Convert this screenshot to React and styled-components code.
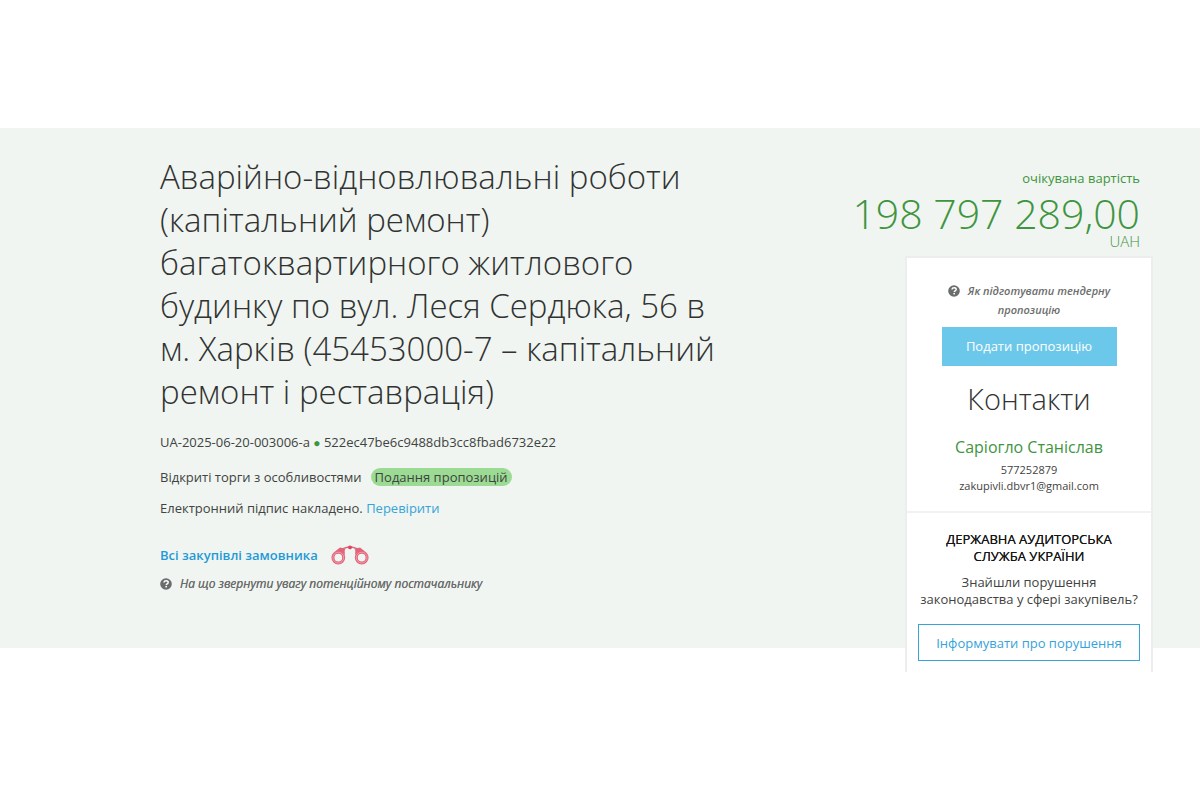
import React from 'react'
import styled, { createGlobalStyle } from 'styled-components'

function HelpIcon() {
    return (
        <HelpSvg viewBox="0 0 12 12" aria-hidden="true">
            <circle cx="6" cy="6" r="5.8" fill="#6b6d6c" />
            <path d="M3.9 4.5c.2-1.2 1-1.8 2.2-1.8 1.2 0 2.1.7 2.1 1.7 0 1.5-1.9 1.5-1.9 2.7" fill="none" stroke="currentColor" strokeWidth="1.5" />
            <rect x="5.4" y="7.9" width="1.6" height="1.5" fill="currentColor" />
        </HelpSvg>
    )
}

function Binoculars() {
    return (
        <BinocularsSvg viewBox="0 0 38 20" aria-hidden="true">
            <g fill="none" stroke="#e2647a">
                <path d="M11.5 3.6C14 3.4 15 2 19 2s5 1.4 7.5 1.6" strokeWidth="1.3" />
                <path d="M12.6 6.4l1.6-3.2M25.4 6.4l-1.6-3.2" strokeWidth="1" />
                <circle cx="7.3" cy="12.6" r="5.4" strokeWidth="3" />
                <circle cx="30.7" cy="12.6" r="5.4" strokeWidth="3" />
            </g>
            <path d="M3.4 7L9 2.4l4.4 1.2.6 6.4C10.8 6.600 7.4 6 3.4 7z" fill="#e2647a" />
            <path d="M34.6 7L29 2.4l-4.4 1.2-.6 6.4c3.2-3.4 6.6-4 10.6-3z" fill="#e2647a" />
            <circle cx="19" cy="2.4" r="1.9" fill="#dc4560" />
            <g fill="none" stroke="#f6c3cc" strokeWidth=".6">
                <circle cx="7.3" cy="12.6" r="5.4" />
                <circle cx="30.7" cy="12.6" r="5.4" />
            </g>
        </BinocularsSvg>
    )
}

function App() {
    return (
        <Page>
            <GlobalStyle />
            <Hero>
                <Info>
                    <Title>
                        Аварійно-відновлювальні роботи (капітальний ремонт) багатоквартирного житлового будинку по вул. Леся Сердюка, 56 в м. Харків (45453000-7 – капітальний ремонт і реставрація)
                    </Title>
                    <TenderId>
                        UA-2025-06-20-003006-a <Dot>●</Dot> 522ec47be6c9488db3cc8fbad6732e22
                    </TenderId>
                    <Row>
                        Відкриті торги з особливостями
                        <Status>Подання пропозицій</Status>
                    </Row>
                    <Row>
                        <span>Електронний підпис накладено. <Link href="#">Перевірити</Link></span>
                    </Row>
                    <Customer>
                        <BoldLink href="#">Всі закупівлі замовника</BoldLink>
                        <Binoculars />
                    </Customer>
                    <Hint href="#">
                        <HelpIcon />
                        На що звернути увагу потенційному постачальнику
                    </Hint>
                </Info>
                <Aside>
                    <Value>
                        <ValueLabel>очікувана вартість</ValueLabel>
                        <Price>198 797 289,00</Price>
                        <Currency>UAH</Currency>
                    </Value>
                    <Card>
                        <Contacts>
                            <CardHint href="#">
                                <HelpIcon />
                                Як підготувати тендерну пропозицію
                            </CardHint>
                            <SubmitButton type="button">Подати пропозицію</SubmitButton>
                            <ContactsTitle>Контакти</ContactsTitle>
                            <Person>Саріогло Станіслав</Person>
                            <Detail>577252879</Detail>
                            <Detail>zakupivli.dbvr1@gmail.com</Detail>
                        </Contacts>
                        <Audit>
                            <AuditTitle>Державна аудиторська служба України</AuditTitle>
                            <AuditText>Знайшли порушення законодавства у сфері закупівель?</AuditText>
                            <ReportButton type="button">Інформувати про порушення</ReportButton>
                        </Audit>
                    </Card>
                </Aside>
            </Hero>
        </Page>
    )
}

const GlobalStyle = createGlobalStyle`
  * {
    box-sizing: border-box;
  }
  body {
    margin: 0;
    background: #fff;
    color: #3f4341;
    font-family: "Open Sans", "Noto Sans", sans-serif;
    font-size: 13px;
    line-height: 20px;
  }
  h1, h2, h3, p {
    margin: 0;
  }
  a {
    text-decoration: none;
  }
  button {
    font-family: inherit;
    font-size: 13px;
    cursor: pointer;
  }
`
const Page = styled.div`
  min-height: 100vh;
  padding: 128px 0;
`
const Hero = styled.main`
  display: flex;
  align-items: flex-start;
  justify-content: space-between;
  padding: 0 47px 0 160px;
  background: #f0f5f1;
`
const Info = styled.section`
  flex: 0 1 560px;
  padding-top: 27px;
`
const Title = styled.h1`
  color: #303332;
  font-size: 33px;
  font-weight: 300;
  line-height: 43px;
`
const TenderId = styled.p`
  margin-top: 19px;
`
const Dot = styled.span`
  color: #3f9440;
  font-size: 12px;
  line-height: 1;
`
const Row = styled.div`
  display: flex;
  align-items: center;
  gap: 9px;
  margin-top: 11px;

  ${TenderId} + & {
    margin-top: 15px;
  }
`
const Status = styled.span`
  padding: 0 4px;
  border-radius: 9px;
  background: #9cdb94;
  line-height: 18px;
`
const Link = styled.a`
  color: #36a3d9;
`
const Customer = styled.div`
  display: flex;
  align-items: center;
  gap: 13px;
  margin-top: 27px;
`
const BoldLink = styled(Link)`
  color: #1f9ad6;
  font-weight: 600;
`
const BinocularsSvg = styled.svg`
  width: 38px;
  height: 20px;
`
const HelpSvg = styled.svg`
  flex: none;
  width: 12px;
  height: 12px;
  margin-right: 8px;
  color: #fff;
`
const Hint = styled.a`
  display: flex;
  align-items: center;
  margin-top: 9px;
  color: #6b6d6c;
  font-size: 12px;
  font-style: italic;
  font-weight: 500;
  text-shadow: 0 0 currentColor;
`
const Aside = styled.aside`
  flex: 0 0 auto;
  padding-top: 40px;
`
const Value = styled.div`
  padding-right: 13px;
  color: #3f9440;
  text-align: right;
`
const ValueLabel = styled.p`
  font-size: 13px;
`
const Price = styled.p`
  margin-top: 5px;
  font-size: 41px;
  font-weight: 300;
  line-height: 40px;
`
const Currency = styled.p`
  font-size: 15px;
  font-weight: 300;
  line-height: 16px;
`
const Card = styled.div`
  width: 248px;
  margin: 7px 0 -24px auto;
  border: 2px solid #ebeeec;
  border-bottom: 0;
  background: #fff;
  text-align: center;
`
const Contacts = styled.section`
  padding: 23px 24px 17px;
`
const CardHint = styled.a`
  display: block;
  color: #6b6d6c;
  font-size: 11px;
  font-style: italic;
  font-weight: 600;
  line-height: 19px;

  svg {
    vertical-align: -2px;
  }
`
const SubmitButton = styled.button`
  display: block;
  width: 175px;
  height: 39px;
  margin: 8px auto 0;
  padding: 0 0 1px;
  border: 0;
  background: #6cc8ea;
  color: #fff;
`
const ContactsTitle = styled.h2`
  margin-top: 13px;
  color: #303332;
  font-size: 29px;
  font-weight: 300;
  line-height: 40px;
`
const Person = styled.h3`
  margin-top: 17px;
  color: #3f9440;
  font-size: 16px;
  font-weight: 400;
  line-height: 22px;
`
const Detail = styled.p`
  font-size: 11px;
  line-height: 16px;

  ${Person} + & {
    margin-top: 4px;
  }
`
const Audit = styled.section`
  padding: 18px 11px 11px;
  border-top: 2px solid #f1f2f1;
`
const AuditTitle = styled.h3`
  padding: 0 20px;
  color: #151615;
  font-size: 13px;
  font-weight: 500;
  line-height: 17px;
  text-shadow: 0 0 currentColor;
  text-transform: uppercase;
`
const AuditText = styled.p`
  margin-top: 9px;
  line-height: 17px;
`
const ReportButton = styled.button`
  width: 100%;
  height: 37px;
  margin-top: 16px;
  padding: 0;
  border: 1px solid #36a3d9;
  background: #fff;
  color: #36a3d9;
`

export default App
